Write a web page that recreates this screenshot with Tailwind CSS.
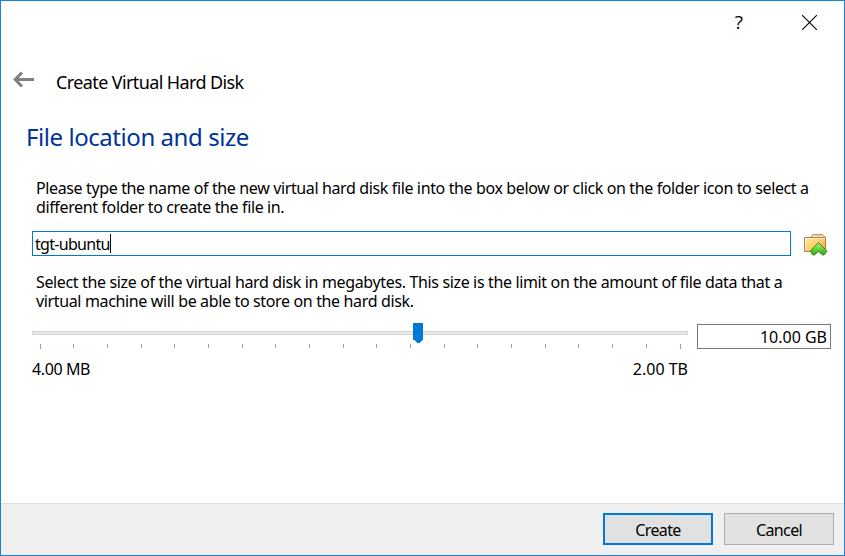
<!DOCTYPE html>
<html lang="en">
<head>
<meta charset="utf-8">
<title>Create Virtual Hard Disk</title>
<script src="https://cdn.jsdelivr.net/npm/@tailwindcss/browser@4"></script>
</head>
<body class="font-['Noto_Sans',sans-serif] text-black">
<div class="flex h-[556px] w-[845px] flex-col overflow-hidden border border-[#1883d7] bg-white text-[16px] leading-[19px] whitespace-nowrap">
  <div class="flex h-[60px] justify-end pr-[27px]">
    <span class="mt-[9px] mr-[59px] font-['Open_Sans',sans-serif] text-[19px] leading-[25px]">?</span>
    <svg class="mt-[14px] h-[15px] w-[15px]" viewBox="0 0 15 15" fill="none" stroke="#000" stroke-width="1.1"><path d="M0 0 15 15M15 0 0 15"/></svg>
  </div>
  <div class="flex h-[42px] pl-[12px]">
    <svg class="mt-[10px] h-[17px] w-[21px]" viewBox="0 0 21 17" fill="none" stroke="#808080" stroke-width="3"><path d="M21 8.5H2.5M9 1.5 2.2 8.5 9 15.5"/></svg>
    <h1 class="ml-[22px] mt-[9px] text-[18px] leading-[25px] tracking-[-0.61px]">Create Virtual Hard Disk</h1>
  </div>
  <h2 class="h-[76px] pl-[25px] pt-[18px] text-[24px] leading-[32px] tracking-[-0.44px] text-[#003399]">File location and size</h2>
  <p class="h-[52px] pl-[35px] tracking-[-0.37px]">Please type the name of the new virtual hard disk file into the box below or click on the folder icon to select a<br>different folder to create the file in.</p>
  <div class="flex h-[42px] pl-[31px]">
    <div class="flex h-[25px] w-[759px] items-center border border-[#0078d7] pl-[2px]">
      <span class="pt-px tracking-[-0.7px]">tgt-ubuntu</span><span class="h-[19px] w-px bg-black"></span>
    </div>
    <svg class="mt-[3px] ml-[12px] h-[24px] w-[26px]" viewBox="0 0 26 24">
      <defs>
        <linearGradient id="folder" x1="0" y1="0" x2="1" y2="1"><stop offset="0" stop-color="#ffedaa"/><stop offset=".55" stop-color="#ffcb68"/><stop offset="1" stop-color="#f5a51f"/></linearGradient>
        <linearGradient id="arrow" x1="0" y1="0" x2="0" y2="1"><stop offset="0" stop-color="#b6f486"/><stop offset=".5" stop-color="#6bd63a"/><stop offset="1" stop-color="#2ca810"/></linearGradient>
      </defs>
      <path d="M8.5 4V2L10 .7H19.5L21.5 2.5V6H8.5Z" fill="#ffe2a4" stroke="#b87c50"/>
      <path d="M1.5 3.5H22.5V17.5H1.5Z" fill="url(#folder)" stroke="#b87c50"/>
      <path d="M2.5 16V4.5H22" fill="none" stroke="#fff3cd"/>
      <path d="M15.5 8.5 24 17.3 21 20.9H19.5L15.5 17.3 11.5 20.9H10L7.2 17.3Z" fill="url(#arrow)" stroke="#2d8521"/>
    </svg>
  </div>
  <p class="h-[50px] pl-[35px] tracking-[-0.355px]">Select the size of the virtual hard disk in megabytes. This size is the limit on the amount of file data that a<br>virtual machine will be able to store on the hard disk.</p>
  <div class="flex h-[180px] pl-[31px]">
    <div class="w-[656px]">
      <svg class="h-[37px] w-[656px]" viewBox="0 0 656 37" shape-rendering="crispEdges">
        <rect x=".5" y="8.5" width="655" height="3" fill="#e7eaea" stroke="#d6d6d6"/>
        <path d="M381 0H391V17H390L387 20H385L382 17H381Z" fill="#0078d7"/>
        <path d="M8.5 21v5M648.5 21v5M41.5 21v4M75.5 21v4M109.5 21v4M142.5 21v4M176.5 21v4M210.5 21v4M243.5 21v4M277.5 21v4M311.5 21v4M344.5 21v4M378.5 21v4M412.5 21v4M445.5 21v4M479.5 21v4M513.5 21v4M546.5 21v4M580.5 21v4M614.5 21v4" stroke="#a0a094"/>
      </svg>
      <div class="flex justify-between"><span class="tracking-[-0.4px]">4.00 MB</span><span>2.00 TB</span></div>
    </div>
    <div class="mt-[1px] ml-[9px] flex h-[25px] w-[134px] items-center justify-end border border-[#7a7a7a] pt-[2px] pr-[3px]">10.00 GB</div>
  </div>
  <div class="flex flex-1 justify-end gap-[11px] border-t border-[#dfdfdf] bg-[#f0f0f0] pt-[9px] pr-[10px]">
    <button class="h-[32px] w-[110px] border-2 border-[#0078d7] bg-[#e1e1e1] pt-[3px] tracking-[-0.6px]">Create</button>
    <button class="h-[32px] w-[110px] border border-[#adadad] bg-[#e1e1e1] pt-[3px] tracking-[-0.6px]">Cancel</button>
  </div>
</div>
</body>
</html>
